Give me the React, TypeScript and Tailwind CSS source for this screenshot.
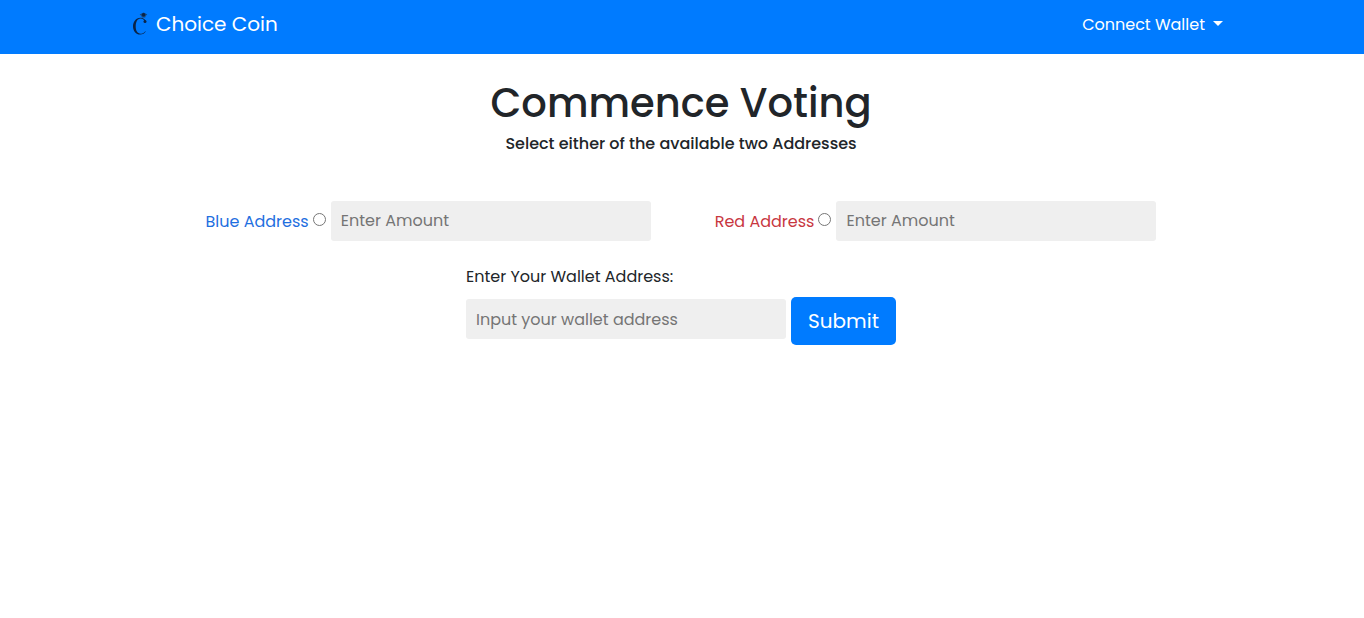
import React from "react";

function Logo() {
  return (
    <svg viewBox="0 0 16 24" className="h-6 w-4 shrink-0" fill="none" aria-hidden="true">
      <path
        d="M14 9.5C13 6.8 10.8 5.6 8.4 5.7C3.8 5.9 1 9.8 1 14.3C1 19.2 4 22.6 8.2 22.6C10.7 22.6 12.6 21.6 13.7 19.6L13.3 19.3C12.2 21 10.6 21.8 8.8 21.7C5.4 21.5 3.6 18.6 3.7 14.2C3.8 9.8 5.4 6.5 8.6 6.4C10.6 6.4 12 7.6 12.6 9.2Z"
        fill="#0b2447"
      />
      <circle cx="13" cy="9.4" r="1.5" fill="#0b2447" />
      <path d="M7.6 2.6L9.6 1.6L11.6 0.4L13.6 1.6L15.4 2.6L13.8 3.8L13.2 5.4H10L9.2 3.8Z" fill="#174a80" />
      <circle cx="11.6" cy="2.8" r="1.7" fill="#0b2447" />
    </svg>
  );
}

type AmountFieldProps = {
  id: string;
  label: string;
  labelClass: string;
};

function AmountField({ id, label, labelClass }: AmountFieldProps) {
  return (
    <div className="flex items-center">
      <label htmlFor={id} className={`pt-0.5 whitespace-nowrap text-base ${labelClass}`}>
        {label}
      </label>
      <input
        id={id}
        type="radio"
        name="address"
        className="mr-[5px] mb-1 ml-1 h-[13px] w-[13px]"
      />
      <input
        type="text"
        aria-label={`${label} amount`}
        placeholder="Enter Amount"
        className="h-10 w-80 rounded-[3px] bg-[#efefef] px-2.5 pb-0.5 text-base text-[#212529] placeholder:text-[#757575]"
      />
    </div>
  );
}

export default function App() {
  return (
    <div className="min-h-screen bg-white font-['Poppins','Inter',sans-serif] text-[#212529]">
      <header className="bg-[#007bff] text-white">
        <nav className="mx-auto flex h-[54px] max-w-[1140px] items-center justify-between pr-[29px] pb-1.5 pl-5">
          <a href="#" className="flex items-center gap-2 text-xl">
            <Logo />
            Choice Coin
          </a>
          <button type="button" className="flex items-center gap-2 text-base">
            <span className="pt-0.5">Connect Wallet</span>
            <svg viewBox="0 0 10 5" className="mb-0.5 h-[5px] w-2.5" fill="currentColor" aria-hidden="true">
              <path d="M0 0H10L5 5Z" />
            </svg>
          </button>
        </nav>
      </header>

      <main className="pt-6 pr-[18px] pl-4 text-center">
        <h1 className="text-[40px] leading-[50px] font-medium">Commence Voting</h1>
        <p className="mt-1.5 text-base leading-[19px] font-medium">
          Select either of the available two Addresses
        </p>

        <form onSubmit={(event) => event.preventDefault()}>
          <div className="mt-12 flex flex-wrap justify-center gap-x-16 gap-y-4">
            <AmountField id="blue" label="Blue Address" labelClass="text-[#1f6fe0]" />
            <AmountField id="red" label="Red Address" labelClass="text-[#c8373f]" />
          </div>

          <div className="mt-6 flex justify-center">
            <div className="text-left">
              <label htmlFor="wallet" className="block text-base leading-6">
                Enter Your Wallet Address:
              </label>
              <div className="mt-2 flex items-center gap-[5px]">
                <input
                  id="wallet"
                  type="text"
                  placeholder="Input your wallet address"
                  className="mb-1 h-10 w-80 rounded-[3px] bg-[#efefef] px-2.5 text-base text-[#212529] placeholder:text-[#757575]"
                />
                <button
                  type="submit"
                  className="h-12 w-[105px] rounded-[5px] bg-[#007bff] text-xl text-white"
                >
                  Submit
                </button>
              </div>
            </div>
          </div>
        </form>
      </main>
    </div>
  );
}
